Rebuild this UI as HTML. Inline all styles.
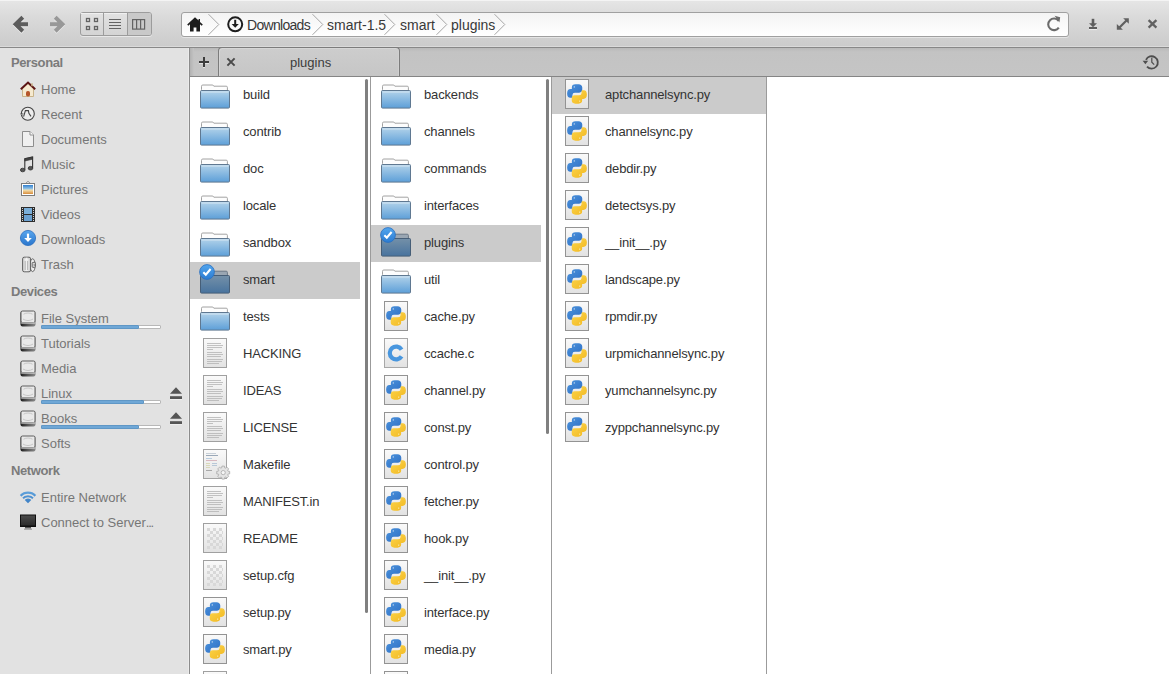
<!DOCTYPE html>
<html><head><meta charset="utf-8">
<style>
*{box-sizing:border-box}
html,body{margin:0;padding:0}
body{width:1169px;height:674px;overflow:hidden;position:relative;background:#fff;font-family:"Liberation Sans",sans-serif;}
.abs{position:absolute}
#hdr{box-sizing:border-box;left:0;top:0;width:1169px;height:48px;background:linear-gradient(#e6e6e6,#d9d9d9 40%,#cbcbcb);border-bottom:1px solid #888;box-shadow:inset 0 1px 0 #f4f4f4,inset 0 -1px 0 #dadada}
#side{left:0;top:48px;width:190px;height:626px;background:#e2e2e2;border-right:1px solid #8c8c8c;box-shadow:inset -1px 0 0 #ebebeb}
#tabs{left:190px;top:48px;width:979px;height:29px;background:linear-gradient(#b9b9b9,#c3c3c3 4px,#c5c5c5);border-bottom:1px solid #858585}
.txt{white-space:nowrap;line-height:1}
.sh{font-weight:bold;font-size:13px;color:#7b7b7b;letter-spacing:-0.4px}
.si{font-size:13px;color:#767676}
.row{position:absolute;height:37px}
.sel{background:#cbcbcb}
.fn{position:absolute;font-size:13px;color:#333;white-space:nowrap;line-height:1;letter-spacing:-0.15px}
.col{position:absolute;top:77px;height:597px;overflow:hidden;background:#fff}
.bord{position:absolute;top:77px;width:1px;height:597px;background:#9b9b9b}
svg{position:absolute;overflow:visible}
</style></head><body>
<svg width="0" height="0" style="position:absolute">
<defs>
<linearGradient id="gfold" x1="0" y1="0" x2="0" y2="1"><stop offset="0" stop-color="#b3d3ea"/><stop offset="1" stop-color="#5d9fd8"/></linearGradient>
<linearGradient id="gfolds" x1="0" y1="0" x2="0" y2="1"><stop offset="0" stop-color="#7490a8"/><stop offset="1" stop-color="#48739e"/></linearGradient>
<linearGradient id="gdoc" x1="0" y1="0" x2="0" y2="1"><stop offset="0" stop-color="#fafafa"/><stop offset="1" stop-color="#e2e2e2"/></linearGradient>
<symbol id="folder" viewBox="0 0 32 26">
<path d="M2.5 5.5V2.3Q2.5 1 3.8 1H13.8L14.8 2.2H27.2Q28.4 2.2 28.4 3.4V7.5H2.5Z" fill="#fdfdfd" stroke="#a2a2a2" stroke-width="1"/>
<rect x="1.5" y="6.5" width="29" height="17.6" rx="1" fill="url(#gfold)" stroke="#5f7891" stroke-width="1"/>
<rect x="2.5" y="7.5" width="27" height="1" fill="#d8e8f4" opacity=".9"/>
</symbol>
<symbol id="folders" viewBox="0 0 32 26">
<path d="M2.5 5.5V2.3Q2.5 1 3.8 1H13.8L14.8 2.2H27.2Q28.4 2.2 28.4 3.4V7.5H2.5Z" fill="#9aa6b2" stroke="#6b7886" stroke-width="1"/>
<rect x="1.5" y="6.5" width="29" height="17.6" rx="1" fill="url(#gfolds)" stroke="#465e77" stroke-width="1"/>
</symbol>
<symbol id="check" viewBox="0 0 16 16">
<defs><linearGradient id="gchk" x1="0" y1="0" x2="0" y2="1"><stop offset="0" stop-color="#52a6ee"/><stop offset="1" stop-color="#2c7cd2"/></linearGradient></defs>
<circle cx="8" cy="8" r="7.4" fill="url(#gchk)" stroke="#2a6fbf" stroke-width=".8"/>
<path d="M4.3 8.2l2.5 2.4 4.8-5.6" fill="none" stroke="#fff" stroke-width="2.1"/>
</symbol>
<symbol id="py" viewBox="0 0 24 30">
<defs><linearGradient id="gpyb" x1="0" y1="0" x2="1" y2="1"><stop offset="0" stop-color="#4a92dc"/><stop offset="1" stop-color="#2f6fc4"/></linearGradient>
<linearGradient id="gpyy" x1="0" y1="0" x2="1" y2="1"><stop offset="0" stop-color="#fbd44a"/><stop offset="1" stop-color="#f2b821"/></linearGradient></defs>
<rect x="0.5" y="0.5" width="23" height="29" fill="url(#gdoc)" stroke="#939393"/>
<path d="M10.5 6c-3 0-3 1.3-3 2.4V10h4.8v.7H5.6C3.7 10.7 2.8 12 2.8 14.4s.9 3.7 2.6 3.7h1.4v-2.1c0-1.6 1.4-3 3-3h4.4c1.4 0 2.4-1.1 2.4-2.4V8.4c0-1.3-1.1-2.4-3-2.4z" fill="url(#gpyb)" stroke="url(#gpyb)" stroke-width="1.3" stroke-linejoin="round"/>
<circle cx="9.3" cy="7.9" r=".7" fill="#cfe0f5"/>
<path d="M13.5 24c3 0 3-1.3 3-2.4V20h-4.8v-.7h6.7c1.9 0 2.8-1.3 2.8-3.7s-.9-3.7-2.6-3.7h-1.4v2.1c0 1.6-1.4 3-3 3H9.8c-1.4 0-2.4 1.1-2.4 2.4v2.2c0 1.3 1.1 2.4 3 2.4z" fill="url(#gpyy)" stroke="url(#gpyy)" stroke-width="1.3" stroke-linejoin="round"/>
<circle cx="14.7" cy="22.1" r=".7" fill="#fdf0c0"/>
</symbol>
<symbol id="txt" viewBox="0 0 24 30">
<rect x="0.5" y="0.5" width="23" height="29" fill="url(#gdoc)" stroke="#a0a0a0"/>
<g stroke="#b4b4b4" stroke-width=".8">
<path d="M4 5.5h14M4 7.5h16M4 9.5h15M4 11.5h6M4 14.5h15M4 16.5h16M4 18.5h14M4 21.5h16M4 23.5h15M4 25.5h12"/>
</g>
</symbol>
<symbol id="chk" viewBox="0 0 24 30">
<rect x="0.5" y="0.5" width="23" height="29" fill="url(#gdoc)" stroke="#a0a0a0"/>
<pattern id="pchk" width="6" height="6" patternUnits="userSpaceOnUse" x="4" y="5"><rect width="3" height="3" fill="#d8d8d8"/><rect x="3" y="3" width="3" height="3" fill="#d8d8d8"/></pattern>
<rect x="4" y="5" width="16" height="21" fill="url(#pchk)"/>
</symbol>
<symbol id="cfile" viewBox="0 0 24 30">
<rect x="0.5" y="0.5" width="23" height="29" fill="url(#gdoc)" stroke="#a8a8a8"/>
<path d="M17.6 11.6A6.4 6.4 0 1 0 17.6 18.4" fill="none" stroke="#4896de" stroke-width="4.2"/>
</symbol>
<symbol id="make" viewBox="0 0 24 30" style="overflow:visible">
<rect x="0.5" y="0.5" width="23" height="29" fill="url(#gdoc)" stroke="#a4a4a4"/>
<g stroke-width="1"><path d="M3 4.5h10" stroke="#c8d0d8"/><path d="M3 6.5h12" stroke="#9aa8b8"/><path d="M3 9.5h6" stroke="#b8cce0"/><path d="M3 11.5h11" stroke="#d8b8c0"/><path d="M3 14.5h4M3 16.5h4M3 18.5h4" stroke="#d8d8b8"/><path d="M9 14.5h5M9 16.5h5" stroke="#b8c8d8"/><path d="M3 21.5h6" stroke="#a8a8a8"/></g>
<path d="M24.97 22.10 L26.68 22.34 L26.68 24.86 L24.97 25.10 L24.64 25.91 L25.67 27.29 L23.89 29.07 L22.51 28.04 L21.70 28.37 L21.46 30.08 L18.94 30.08 L18.70 28.37 L17.89 28.04 L16.51 29.07 L14.73 27.29 L15.76 25.91 L15.43 25.10 L13.72 24.86 L13.72 22.34 L15.43 22.10 L15.76 21.29 L14.73 19.91 L16.51 18.13 L17.89 19.16 L18.70 18.83 L18.94 17.12 L21.46 17.12 L21.70 18.83 L22.51 19.16 L23.89 18.13 L25.67 19.91 L24.64 21.29Z" fill="#e4e4e4" stroke="#a8a8a8" stroke-width=".8" stroke-linejoin="round"/>
<circle cx="20.2" cy="23.6" r="2.1" fill="#f6f6f6" stroke="#a8a8a8" stroke-width=".8"/>
</symbol>
</defs>
</svg>

<div id="hdr" class="abs"></div>
<svg style="left:12px;top:15px" width="18" height="19" viewBox="0 0 18 19"><g fill="none" stroke="#fff" stroke-opacity=".6" stroke-width="4" transform="translate(0,1)"><path d="M10.8 2.2L3.6 9.2 10.8 16.2M5 9.2H16"/></g><g fill="none" stroke="#5c5c5c" stroke-width="4"><path d="M10.8 2.2L3.6 9.2 10.8 16.2M5 9.2H16"/></g></svg>
<svg style="left:48px;top:15px" width="18" height="19" viewBox="0 0 18 19"><g fill="none" stroke="#fff" stroke-opacity=".5" stroke-width="4" transform="translate(0,1)"><path d="M7.2 2.2L14.4 9.2 7.2 16.2M13 9.2H2"/></g><g fill="none" stroke="#989898" stroke-width="4"><path d="M7.2 2.2L14.4 9.2 7.2 16.2M13 9.2H2"/></g></svg>
<div class="abs" style="left:80px;top:12px;width:72px;height:24px;border:1px solid #9c9c9c;border-radius:3px;background:linear-gradient(#e2e2e2,#d4d4d4);box-shadow:0 1px 0 rgba(255,255,255,.5)"></div>
<div class="abs" style="left:81px;top:13px;width:22px;height:22px;box-shadow:inset 0 1px 0 #f0f0f0"></div>
<div class="abs" style="left:104px;top:13px;width:23px;height:22px;box-shadow:inset 0 1px 0 #f0f0f0"></div>
<div class="abs" style="left:103px;top:13px;width:1px;height:22px;background:#9c9c9c"></div>
<div class="abs" style="left:127px;top:13px;width:1px;height:22px;background:#9c9c9c"></div>
<div class="abs" style="left:128px;top:13px;width:23px;height:22px;background:#c9c9c9;border-radius:0 2px 2px 0"></div>
<svg style="left:80px;top:12px" width="72" height="24" viewBox="0 0 72 24"><g fill="none" stroke="#636363" stroke-width="1.3"><rect x="6.5" y="6.5" width="3" height="3"/><rect x="14.5" y="6.5" width="3" height="3"/><rect x="6.5" y="14.5" width="3" height="3"/><rect x="14.5" y="14.5" width="3" height="3"/></g><g stroke="#636363" stroke-width="1"><path d="M29 7.5h12M29 10.5h12M29 13.5h12M29 16.5h12"/></g><g fill="none" stroke="#636363" stroke-width="1.2"><rect x="52.6" y="7.6" width="12" height="9.5"/><path d="M56.6 7.6v9.5M60.6 7.6v9.5"/></g></svg>
<div class="abs" style="left:181px;top:12px;width:888px;height:25px;border:1px solid #a0a0a0;border-radius:3px;background:linear-gradient(#f4f4f4,#fff);box-shadow:0 1px 0 rgba(255,255,255,.45)"></div>
<svg style="left:186px;top:16px" width="18" height="17" viewBox="0 0 18 17"><path d="M9 1.2L1.2 8.6 2.3 9.8 4 8.3V15.6H7.6V11.6H10.4V15.6H14V8.3L15.7 9.8 16.8 8.6 14 6V3H12.6V4.6Z" fill="#1c1c1c"/></svg>
<svg style="left:208px;top:13px" width="12" height="23" viewBox="0 0 12 23"><path d="M0.5 1.2L10.8 11.5 0.5 21.8" fill="none" stroke="#a6a6a6" stroke-width="1"/></svg>
<svg style="left:312px;top:13px" width="12" height="23" viewBox="0 0 12 23"><path d="M0.5 1.2L10.8 11.5 0.5 21.8" fill="none" stroke="#a6a6a6" stroke-width="1"/></svg>
<svg style="left:384px;top:13px" width="12" height="23" viewBox="0 0 12 23"><path d="M0.5 1.2L10.8 11.5 0.5 21.8" fill="none" stroke="#a6a6a6" stroke-width="1"/></svg>
<svg style="left:436px;top:13px" width="12" height="23" viewBox="0 0 12 23"><path d="M0.5 1.2L10.8 11.5 0.5 21.8" fill="none" stroke="#a6a6a6" stroke-width="1"/></svg>
<svg style="left:494px;top:13px" width="12" height="23" viewBox="0 0 12 23"><path d="M0.5 1.2L10.8 11.5 0.5 21.8" fill="none" stroke="#a6a6a6" stroke-width="1"/></svg>
<svg style="left:226px;top:15px" width="18" height="18" viewBox="0 0 18 18"><circle cx="9.2" cy="9.3" r="7" fill="none" stroke="#1e1e1e" stroke-width="2"/><path d="M9.2 4.8v5" stroke="#1e1e1e" stroke-width="2"/><path d="M5.6 9H12.8L9.2 12.8Z" fill="#1e1e1e"/></svg>
<div class="abs txt" style="left:247px;top:18px;font-size:14px;color:#383838;letter-spacing:-0.7px">Downloads</div>
<div class="abs txt" style="left:327px;top:18px;font-size:14px;color:#383838;letter-spacing:0px">smart-1.5</div>
<div class="abs txt" style="left:400px;top:18px;font-size:14px;color:#383838;letter-spacing:0px">smart</div>
<div class="abs txt" style="left:451px;top:18px;font-size:14px;color:#383838;letter-spacing:0px">plugins</div>
<svg style="left:1046px;top:15px" width="16" height="17" viewBox="0 0 16 17"><path d="M12.6 5.8A5.8 5.8 0 1 0 12.8 12.6" fill="none" stroke="#6b6b6b" stroke-width="2.1"/><path d="M8.6 0.8L14.2 2.2 13.4 7.6Z" fill="#6b6b6b"/></svg>
<svg style="left:1087px;top:17px" width="12" height="14" viewBox="0 0 12 14"><path d="M6 1.8v6" stroke="#5e5e5e" stroke-width="2.6"/><path d="M2 6.2H10L6 10.2Z" fill="#5e5e5e"/><rect x="2" y="10" width="8" height="2" fill="#5e5e5e"/><path d="M2 12.6h8" stroke="#fff" stroke-opacity=".7" stroke-width=".9"/></svg>
<svg style="left:1116px;top:17px" width="14" height="14" viewBox="0 0 14 14"><path d="M3 11L11.2 2.8" stroke="#616161" stroke-width="2.2"/><path d="M7.2 1.2H12.8V6.8Z" fill="#616161"/><path d="M0.8 6.9V12.8H6.9Z" fill="#616161"/></svg>
<svg style="left:1147px;top:19px" width="11" height="10" viewBox="0 0 11 10"><path d="M1.6 1.2L9.4 8.6M9.4 1.2L1.6 8.6" stroke="#616161" stroke-width="2.3"/></svg>
<div id="side" class="abs"></div>
<div class="abs txt sh" style="left:11px;top:56px">Personal</div>
<svg style="left:20px;top:81px" width="16" height="16" viewBox="0 0 16 16"><path d="M2.5 7.5V15.5H13.5V7.5L8 2.5Z" fill="#f6ead0" stroke="#c9b48a" stroke-width="1"/><rect x="6" y="10" width="4" height="5.5" rx="1.8" fill="#b5552a"/><path d="M0.8 8.2L8 1.6 15.2 8.2" fill="none" stroke="#5c1414" stroke-width="2"/><path d="M12 2.2v3" stroke="#c9b48a" stroke-width="1.5"/></svg>
<div class="abs txt si" style="left:41px;top:83px">Home</div>
<svg style="left:20px;top:106px" width="16" height="16" viewBox="0 0 16 16"><circle cx="7.8" cy="7.8" r="6.5" fill="#ececec" stroke="#454545" stroke-width="1.1"/><path d="M3.6 10.6L5.4 4.6H8.4L8.9 7.4 11 10.4" fill="none" stroke="#454545" stroke-width="1.1"/><path d="M0.4 7.4H3.6L1.8 10.6Z" fill="#454545"/><path d="M1.4 7.9H2.8L2 9.2Z" fill="#f4f4f4"/></svg>
<div class="abs txt si" style="left:41px;top:108px">Recent</div>
<svg style="left:21px;top:131px" width="14" height="17" viewBox="0 0 14 17"><path d="M1.5 0.5H9L12.5 4V15.5H1.5Z" fill="#f0f0f0" stroke="#8e8e8e" stroke-width="1"/><path d="M9 0.5V4H12.5" fill="#fff" stroke="#8e8e8e" stroke-width="1"/></svg>
<div class="abs txt si" style="left:41px;top:133px">Documents</div>
<svg style="left:19px;top:156px" width="16" height="17" viewBox="0 0 16 17"><path d="M5.8 13.8V2.8L13.6 1V12" fill="none" stroke="#333" stroke-width="1.1"/><path d="M5.8 2.8L13.6 1V3.2L5.8 5Z" fill="#444" stroke="#333" stroke-width=".6"/><ellipse cx="3.7" cy="14" rx="2.3" ry="1.8" fill="#555" stroke="#2e2e2e" stroke-width=".8"/><ellipse cx="11.5" cy="12.2" rx="2.3" ry="1.8" fill="#555" stroke="#2e2e2e" stroke-width=".8"/></svg>
<div class="abs txt si" style="left:41px;top:158px">Music</div>
<svg style="left:20px;top:180px" width="16" height="17" viewBox="0 0 16 17"><path d="M5.5 3.5L8 1.2 10.5 3.5" fill="none" stroke="#9a9a9a" stroke-width="1"/><rect x="1.5" y="3.5" width="13" height="12" fill="#fff" stroke="#7c7c7c"/><defs><linearGradient id="gpic" x1="0" y1="0" x2="0" y2="1"><stop offset="0" stop-color="#2f7fd0"/><stop offset=".45" stop-color="#9cc8e6"/><stop offset=".55" stop-color="#f3e1b0"/><stop offset="1" stop-color="#d98c3a"/></linearGradient></defs><rect x="3" y="5" width="10" height="9" fill="url(#gpic)"/></svg>
<div class="abs txt si" style="left:41px;top:183px">Pictures</div>
<svg style="left:21px;top:207px" width="14" height="15" viewBox="0 0 14 15"><rect x="0" y="0" width="14" height="15" fill="#2c2c2c"/><rect x="3" y="1" width="8" height="6" fill="#7aaed8"/><rect x="3" y="8" width="8" height="6" fill="#6aa0d0"/><g fill="#d0d0d0"><rect x="1" y="1" width="1" height="1"/><rect x="1" y="3" width="1" height="1"/><rect x="1" y="5" width="1" height="1"/><rect x="1" y="7" width="1" height="1"/><rect x="1" y="9" width="1" height="1"/><rect x="1" y="11" width="1" height="1"/><rect x="1" y="13" width="1" height="1"/><rect x="12" y="1" width="1" height="1"/><rect x="12" y="3" width="1" height="1"/><rect x="12" y="5" width="1" height="1"/><rect x="12" y="7" width="1" height="1"/><rect x="12" y="9" width="1" height="1"/><rect x="12" y="11" width="1" height="1"/><rect x="12" y="13" width="1" height="1"/></g></svg>
<div class="abs txt si" style="left:41px;top:208px">Videos</div>
<svg style="left:20px;top:230px" width="16" height="16" viewBox="0 0 16 16"><defs><linearGradient id="gdl" x1="0" y1="0" x2="0" y2="1"><stop offset="0" stop-color="#58a6ee"/><stop offset="1" stop-color="#2a76cc"/></linearGradient></defs><circle cx="8" cy="8" r="7.6" fill="url(#gdl)" stroke="#2b6fbf" stroke-width=".8"/><path d="M8 3.6V8.5" stroke="#fff" stroke-width="2.2"/><path d="M4.2 8H11.8L8 12Z" fill="#fff"/></svg>
<div class="abs txt si" style="left:41px;top:233px">Downloads</div>
<svg style="left:22px;top:256px" width="15" height="17" viewBox="0 0 15 17"><defs><linearGradient id="gtr" x1="0" y1="0" x2="1" y2="0"><stop offset="0" stop-color="#cfcfcf"/><stop offset=".5" stop-color="#f2f2f2"/><stop offset="1" stop-color="#c8c8c8"/></linearGradient></defs><ellipse cx="10.6" cy="9.2" rx="2.6" ry="6.4" fill="#ededed" stroke="#5a5a5a" stroke-width=".9"/><rect x="10.2" y="6.4" width="3.2" height="5" rx=".8" fill="#e0e0e0" stroke="#5a5a5a" stroke-width=".9"/><path d="M11.3 8.3h1.2v1.6h-1.2" fill="none" stroke="#777" stroke-width=".6"/><rect x="0.6" y="1.2" width="8" height="14.6" rx="1.6" fill="url(#gtr)" stroke="#555" stroke-width=".9"/><path d="M1.5 3.2Q4.6 0.4 7.7 3.2" fill="#fff" stroke="#bbb" stroke-width=".6"/><path d="M3.2 5v9M5.6 5v9" stroke="#a8a8a8" stroke-width=".8"/></svg>
<div class="abs txt si" style="left:41px;top:258px">Trash</div>
<div class="abs txt sh" style="left:11px;top:285px">Devices</div>
<svg style="left:20px;top:310px" width="16" height="17" viewBox="0 0 16 17"><defs><linearGradient id="gdrv" x1="0" y1="0" x2="1" y2="0"><stop offset="0" stop-color="#1e1e1e"/><stop offset=".5" stop-color="#5a5a5a"/><stop offset="1" stop-color="#8a8a8a"/></linearGradient></defs><rect x="0.5" y="1" width="15" height="15.4" rx="2" fill="url(#gdrv)"/><rect x="1" y="1" width="14" height="11.6" rx="1.5" fill="#e9e9e9" stroke="#5e5e5e" stroke-width="1"/><path d="M3.5 4.2C6 2.6 10 2.6 12.5 4.2M3 9C6 11 10 11 13 9" fill="none" stroke="#bdbdbd" stroke-width=".8"/><rect x="1.2" y="12.6" width="13.6" height=".9" fill="#f4f4f4"/></svg>
<div class="abs txt si" style="left:41px;top:312px">File System</div>
<svg style="left:20px;top:335px" width="16" height="17" viewBox="0 0 16 17"><defs><linearGradient id="gdrv" x1="0" y1="0" x2="1" y2="0"><stop offset="0" stop-color="#1e1e1e"/><stop offset=".5" stop-color="#5a5a5a"/><stop offset="1" stop-color="#8a8a8a"/></linearGradient></defs><rect x="0.5" y="1" width="15" height="15.4" rx="2" fill="url(#gdrv)"/><rect x="1" y="1" width="14" height="11.6" rx="1.5" fill="#e9e9e9" stroke="#5e5e5e" stroke-width="1"/><path d="M3.5 4.2C6 2.6 10 2.6 12.5 4.2M3 9C6 11 10 11 13 9" fill="none" stroke="#bdbdbd" stroke-width=".8"/><rect x="1.2" y="12.6" width="13.6" height=".9" fill="#f4f4f4"/></svg>
<div class="abs txt si" style="left:41px;top:337px">Tutorials</div>
<svg style="left:20px;top:360px" width="16" height="17" viewBox="0 0 16 17"><defs><linearGradient id="gdrv" x1="0" y1="0" x2="1" y2="0"><stop offset="0" stop-color="#1e1e1e"/><stop offset=".5" stop-color="#5a5a5a"/><stop offset="1" stop-color="#8a8a8a"/></linearGradient></defs><rect x="0.5" y="1" width="15" height="15.4" rx="2" fill="url(#gdrv)"/><rect x="1" y="1" width="14" height="11.6" rx="1.5" fill="#e9e9e9" stroke="#5e5e5e" stroke-width="1"/><path d="M3.5 4.2C6 2.6 10 2.6 12.5 4.2M3 9C6 11 10 11 13 9" fill="none" stroke="#bdbdbd" stroke-width=".8"/><rect x="1.2" y="12.6" width="13.6" height=".9" fill="#f4f4f4"/></svg>
<div class="abs txt si" style="left:41px;top:362px">Media</div>
<svg style="left:20px;top:385px" width="16" height="17" viewBox="0 0 16 17"><defs><linearGradient id="gdrv" x1="0" y1="0" x2="1" y2="0"><stop offset="0" stop-color="#1e1e1e"/><stop offset=".5" stop-color="#5a5a5a"/><stop offset="1" stop-color="#8a8a8a"/></linearGradient></defs><rect x="0.5" y="1" width="15" height="15.4" rx="2" fill="url(#gdrv)"/><rect x="1" y="1" width="14" height="11.6" rx="1.5" fill="#e9e9e9" stroke="#5e5e5e" stroke-width="1"/><path d="M3.5 4.2C6 2.6 10 2.6 12.5 4.2M3 9C6 11 10 11 13 9" fill="none" stroke="#bdbdbd" stroke-width=".8"/><rect x="1.2" y="12.6" width="13.6" height=".9" fill="#f4f4f4"/></svg>
<div class="abs txt si" style="left:41px;top:387px">Linux</div>
<svg style="left:20px;top:410px" width="16" height="17" viewBox="0 0 16 17"><defs><linearGradient id="gdrv" x1="0" y1="0" x2="1" y2="0"><stop offset="0" stop-color="#1e1e1e"/><stop offset=".5" stop-color="#5a5a5a"/><stop offset="1" stop-color="#8a8a8a"/></linearGradient></defs><rect x="0.5" y="1" width="15" height="15.4" rx="2" fill="url(#gdrv)"/><rect x="1" y="1" width="14" height="11.6" rx="1.5" fill="#e9e9e9" stroke="#5e5e5e" stroke-width="1"/><path d="M3.5 4.2C6 2.6 10 2.6 12.5 4.2M3 9C6 11 10 11 13 9" fill="none" stroke="#bdbdbd" stroke-width=".8"/><rect x="1.2" y="12.6" width="13.6" height=".9" fill="#f4f4f4"/></svg>
<div class="abs txt si" style="left:41px;top:412px">Books</div>
<svg style="left:20px;top:435px" width="16" height="17" viewBox="0 0 16 17"><defs><linearGradient id="gdrv" x1="0" y1="0" x2="1" y2="0"><stop offset="0" stop-color="#1e1e1e"/><stop offset=".5" stop-color="#5a5a5a"/><stop offset="1" stop-color="#8a8a8a"/></linearGradient></defs><rect x="0.5" y="1" width="15" height="15.4" rx="2" fill="url(#gdrv)"/><rect x="1" y="1" width="14" height="11.6" rx="1.5" fill="#e9e9e9" stroke="#5e5e5e" stroke-width="1"/><path d="M3.5 4.2C6 2.6 10 2.6 12.5 4.2M3 9C6 11 10 11 13 9" fill="none" stroke="#bdbdbd" stroke-width=".8"/><rect x="1.2" y="12.6" width="13.6" height=".9" fill="#f4f4f4"/></svg>
<div class="abs txt si" style="left:41px;top:437px">Softs</div>
<div class="abs txt sh" style="left:11px;top:464px">Network</div>
<svg style="left:19px;top:490px" width="18" height="14" viewBox="0 0 18 14"><defs><linearGradient id="gwifi" x1="0" y1="0" x2="0" y2="1"><stop offset="0" stop-color="#5fa2dc"/><stop offset="1" stop-color="#3a7ec4"/></linearGradient></defs><path d="M9 13.2L0.80 5.00A11.6 11.6 0 0 1 17.20 5.00Z" fill="url(#gwifi)"/><path d="M2.34 7.61A8.7 8.7 0 0 1 15.66 7.61 M4.86 9.73A5.4 5.4 0 0 1 13.14 9.73" fill="none" stroke="#e2e2e2" stroke-width="1.3"/></svg>
<div class="abs txt si" style="left:41px;top:491px">Entire Network</div>
<svg style="left:19px;top:514px" width="18" height="17" viewBox="0 0 18 17"><rect x="1" y="0.5" width="16" height="12.5" fill="#0e0e0e"/><defs><linearGradient id="gmon" x1="0" y1="0" x2="0" y2="1"><stop offset="0" stop-color="#4a4a4a"/><stop offset="1" stop-color="#2a2a2a"/></linearGradient></defs><rect x="2" y="1.5" width="14" height="10" fill="url(#gmon)"/><path d="M6 13V14.5H12V13" fill="#555"/><rect x="5" y="14.5" width="8" height="1.3" rx=".6" fill="#9a9a9a"/></svg>
<div class="abs txt si" style="left:41px;top:516px">Connect to Server<span style="letter-spacing:-1.2px">...</span></div>
<div class="abs" style="left:41px;top:325px;width:120px;height:4px;background:#fff;border:1px solid #b8b8b8;border-radius:1px"></div>
<div class="abs" style="left:41px;top:325px;width:98px;height:4px;background:#6fa7d6;border:1px solid #5f97c6;border-radius:1px"></div>
<div class="abs" style="left:41px;top:400px;width:120px;height:4px;background:#fff;border:1px solid #b8b8b8;border-radius:1px"></div>
<div class="abs" style="left:41px;top:400px;width:103px;height:4px;background:#6fa7d6;border:1px solid #5f97c6;border-radius:1px"></div>
<div class="abs" style="left:41px;top:425px;width:120px;height:4px;background:#fff;border:1px solid #b8b8b8;border-radius:1px"></div>
<div class="abs" style="left:41px;top:425px;width:98px;height:4px;background:#6fa7d6;border:1px solid #5f97c6;border-radius:1px"></div>
<svg style="left:169px;top:387px" width="14" height="13" viewBox="0 0 14 13"><path d="M7 0.2L13 6.8H1Z" fill="#555"/><rect x="1" y="9.2" width="12" height="2.8" fill="#555"/><path d="M1 12.6h12" stroke="#fff" stroke-opacity=".6" stroke-width=".8"/></svg>
<svg style="left:169px;top:412px" width="14" height="13" viewBox="0 0 14 13"><path d="M7 0.2L13 6.8H1Z" fill="#555"/><rect x="1" y="9.2" width="12" height="2.8" fill="#555"/><path d="M1 12.6h12" stroke="#fff" stroke-opacity=".6" stroke-width=".8"/></svg>
<div id="tabs" class="abs"></div>
<div class="abs" style="left:190px;top:48px;width:4px;height:28px;background:linear-gradient(90deg,#b2b2b2,#c4c4c4)"></div>
<svg style="left:198px;top:56px" width="12" height="12" viewBox="0 0 12 12"><path d="M6 1v10M1 6h10" stroke="#fff" stroke-opacity=".5" stroke-width="2" transform="translate(0,1)"/><path d="M6 1v10M1 6h10" stroke="#3c3c3c" stroke-width="2"/></svg>
<div class="abs" style="left:218px;top:47px;width:182px;height:29px;border:1px solid #7c7c7c;border-bottom:none;border-radius:4px 4px 0 0;background:linear-gradient(#cdcdcd,#c6c6c6);box-shadow:inset 1px 1px 0 #d6d6d6,inset -1px 0 0 #d0d0d0"></div>
<svg style="left:226px;top:57px" width="10" height="10" viewBox="0 0 10 10"><path d="M1.4 1.4L8.6 8.6M8.6 1.4L1.4 8.6" stroke="#4a4a4a" stroke-width="2"/></svg>
<div class="abs txt" style="left:290px;top:56px;font-size:13px;color:#3c3c3c">plugins</div>
<svg style="left:1142px;top:54px" width="18" height="16" viewBox="0 0 18 16"><path d="M4 5.8A6.2 6.2 0 1 1 5 12.6" fill="none" stroke="#4e4e4e" stroke-width="1.8"/><path d="M0.6 6.8H6.2L3.4 10.2Z" fill="#4e4e4e"/><path d="M9.8 3.8V8.2L12.2 10.6" fill="none" stroke="#4e4e4e" stroke-width="1.2"/></svg>
<div class="col" style="left:190px;width:180px">
<div class="row" style="left:0;top:0px;width:170px"></div>
<svg style="left:9px;top:7px" width="32" height="26"><use href="#folder"/></svg>
<div class="fn" style="left:53px;top:11px">build</div>
<div class="row" style="left:0;top:37px;width:170px"></div>
<svg style="left:9px;top:44px" width="32" height="26"><use href="#folder"/></svg>
<div class="fn" style="left:53px;top:48px">contrib</div>
<div class="row" style="left:0;top:74px;width:170px"></div>
<svg style="left:9px;top:81px" width="32" height="26"><use href="#folder"/></svg>
<div class="fn" style="left:53px;top:85px">doc</div>
<div class="row" style="left:0;top:111px;width:170px"></div>
<svg style="left:9px;top:118px" width="32" height="26"><use href="#folder"/></svg>
<div class="fn" style="left:53px;top:122px">locale</div>
<div class="row" style="left:0;top:148px;width:170px"></div>
<svg style="left:9px;top:155px" width="32" height="26"><use href="#folder"/></svg>
<div class="fn" style="left:53px;top:159px">sandbox</div>
<div class="row sel" style="left:0;top:185px;width:170px"></div>
<svg style="left:9px;top:192px" width="32" height="26"><use href="#folders"/></svg>
<svg style="left:9px;top:187px" width="16" height="16"><use href="#check"/></svg>
<div class="fn" style="left:53px;top:196px">smart</div>
<div class="row" style="left:0;top:222px;width:170px"></div>
<svg style="left:9px;top:229px" width="32" height="26"><use href="#folder"/></svg>
<div class="fn" style="left:53px;top:233px">tests</div>
<div class="row" style="left:0;top:259px;width:170px"></div>
<svg style="left:13px;top:261px" width="24" height="30"><use href="#txt"/></svg>
<div class="fn" style="left:53px;top:270px">HACKING</div>
<div class="row" style="left:0;top:296px;width:170px"></div>
<svg style="left:13px;top:298px" width="24" height="30"><use href="#txt"/></svg>
<div class="fn" style="left:53px;top:307px">IDEAS</div>
<div class="row" style="left:0;top:333px;width:170px"></div>
<svg style="left:13px;top:335px" width="24" height="30"><use href="#txt"/></svg>
<div class="fn" style="left:53px;top:344px">LICENSE</div>
<div class="row" style="left:0;top:370px;width:170px"></div>
<svg style="left:13px;top:372px" width="24" height="30"><use href="#make"/></svg>
<div class="fn" style="left:53px;top:381px">Makefile</div>
<div class="row" style="left:0;top:407px;width:170px"></div>
<svg style="left:13px;top:409px" width="24" height="30"><use href="#txt"/></svg>
<div class="fn" style="left:53px;top:418px">MANIFEST.in</div>
<div class="row" style="left:0;top:444px;width:170px"></div>
<svg style="left:13px;top:446px" width="24" height="30"><use href="#chk"/></svg>
<div class="fn" style="left:53px;top:455px">README</div>
<div class="row" style="left:0;top:481px;width:170px"></div>
<svg style="left:13px;top:483px" width="24" height="30"><use href="#chk"/></svg>
<div class="fn" style="left:53px;top:492px">setup.cfg</div>
<div class="row" style="left:0;top:518px;width:170px"></div>
<svg style="left:13px;top:520px" width="24" height="30"><use href="#py"/></svg>
<div class="fn" style="left:53px;top:529px">setup.py</div>
<div class="row" style="left:0;top:555px;width:170px"></div>
<svg style="left:13px;top:557px" width="24" height="30"><use href="#py"/></svg>
<div class="fn" style="left:53px;top:566px">smart.py</div>
<div class="row" style="left:0;top:592px;width:170px"></div>
<svg style="left:13px;top:594px" width="24" height="30"><use href="#txt"/></svg>
</div>
<div class="bord" style="left:370px"></div>
<div class="col" style="left:371px;width:180px">
<div class="row" style="left:0;top:0px;width:170px"></div>
<svg style="left:9px;top:7px" width="32" height="26"><use href="#folder"/></svg>
<div class="fn" style="left:53px;top:11px">backends</div>
<div class="row" style="left:0;top:37px;width:170px"></div>
<svg style="left:9px;top:44px" width="32" height="26"><use href="#folder"/></svg>
<div class="fn" style="left:53px;top:48px">channels</div>
<div class="row" style="left:0;top:74px;width:170px"></div>
<svg style="left:9px;top:81px" width="32" height="26"><use href="#folder"/></svg>
<div class="fn" style="left:53px;top:85px">commands</div>
<div class="row" style="left:0;top:111px;width:170px"></div>
<svg style="left:9px;top:118px" width="32" height="26"><use href="#folder"/></svg>
<div class="fn" style="left:53px;top:122px">interfaces</div>
<div class="row sel" style="left:0;top:148px;width:170px"></div>
<svg style="left:9px;top:155px" width="32" height="26"><use href="#folders"/></svg>
<svg style="left:9px;top:150px" width="16" height="16"><use href="#check"/></svg>
<div class="fn" style="left:53px;top:159px">plugins</div>
<div class="row" style="left:0;top:185px;width:170px"></div>
<svg style="left:9px;top:192px" width="32" height="26"><use href="#folder"/></svg>
<div class="fn" style="left:53px;top:196px">util</div>
<div class="row" style="left:0;top:222px;width:170px"></div>
<svg style="left:13px;top:224px" width="24" height="30"><use href="#py"/></svg>
<div class="fn" style="left:53px;top:233px">cache.py</div>
<div class="row" style="left:0;top:259px;width:170px"></div>
<svg style="left:13px;top:261px" width="24" height="30"><use href="#cfile"/></svg>
<div class="fn" style="left:53px;top:270px">ccache.c</div>
<div class="row" style="left:0;top:296px;width:170px"></div>
<svg style="left:13px;top:298px" width="24" height="30"><use href="#py"/></svg>
<div class="fn" style="left:53px;top:307px">channel.py</div>
<div class="row" style="left:0;top:333px;width:170px"></div>
<svg style="left:13px;top:335px" width="24" height="30"><use href="#py"/></svg>
<div class="fn" style="left:53px;top:344px">const.py</div>
<div class="row" style="left:0;top:370px;width:170px"></div>
<svg style="left:13px;top:372px" width="24" height="30"><use href="#py"/></svg>
<div class="fn" style="left:53px;top:381px">control.py</div>
<div class="row" style="left:0;top:407px;width:170px"></div>
<svg style="left:13px;top:409px" width="24" height="30"><use href="#py"/></svg>
<div class="fn" style="left:53px;top:418px">fetcher.py</div>
<div class="row" style="left:0;top:444px;width:170px"></div>
<svg style="left:13px;top:446px" width="24" height="30"><use href="#py"/></svg>
<div class="fn" style="left:53px;top:455px">hook.py</div>
<div class="row" style="left:0;top:481px;width:170px"></div>
<svg style="left:13px;top:483px" width="24" height="30"><use href="#py"/></svg>
<div class="fn" style="left:53px;top:492px">__init__.py</div>
<div class="row" style="left:0;top:518px;width:170px"></div>
<svg style="left:13px;top:520px" width="24" height="30"><use href="#py"/></svg>
<div class="fn" style="left:53px;top:529px">interface.py</div>
<div class="row" style="left:0;top:555px;width:170px"></div>
<svg style="left:13px;top:557px" width="24" height="30"><use href="#py"/></svg>
<div class="fn" style="left:53px;top:566px">media.py</div>
<div class="row" style="left:0;top:592px;width:170px"></div>
<svg style="left:13px;top:594px" width="24" height="30"><use href="#py"/></svg>
</div>
<div class="bord" style="left:551px"></div>
<div class="col" style="left:552px;width:214px">
<div class="row sel" style="left:0;top:0px;width:214px"></div>
<svg style="left:13px;top:2px" width="24" height="30"><use href="#py"/></svg>
<div class="fn" style="left:53px;top:11px">aptchannelsync.py</div>
<div class="row" style="left:0;top:37px;width:214px"></div>
<svg style="left:13px;top:39px" width="24" height="30"><use href="#py"/></svg>
<div class="fn" style="left:53px;top:48px">channelsync.py</div>
<div class="row" style="left:0;top:74px;width:214px"></div>
<svg style="left:13px;top:76px" width="24" height="30"><use href="#py"/></svg>
<div class="fn" style="left:53px;top:85px">debdir.py</div>
<div class="row" style="left:0;top:111px;width:214px"></div>
<svg style="left:13px;top:113px" width="24" height="30"><use href="#py"/></svg>
<div class="fn" style="left:53px;top:122px">detectsys.py</div>
<div class="row" style="left:0;top:148px;width:214px"></div>
<svg style="left:13px;top:150px" width="24" height="30"><use href="#py"/></svg>
<div class="fn" style="left:53px;top:159px">__init__.py</div>
<div class="row" style="left:0;top:185px;width:214px"></div>
<svg style="left:13px;top:187px" width="24" height="30"><use href="#py"/></svg>
<div class="fn" style="left:53px;top:196px">landscape.py</div>
<div class="row" style="left:0;top:222px;width:214px"></div>
<svg style="left:13px;top:224px" width="24" height="30"><use href="#py"/></svg>
<div class="fn" style="left:53px;top:233px">rpmdir.py</div>
<div class="row" style="left:0;top:259px;width:214px"></div>
<svg style="left:13px;top:261px" width="24" height="30"><use href="#py"/></svg>
<div class="fn" style="left:53px;top:270px">urpmichannelsync.py</div>
<div class="row" style="left:0;top:296px;width:214px"></div>
<svg style="left:13px;top:298px" width="24" height="30"><use href="#py"/></svg>
<div class="fn" style="left:53px;top:307px">yumchannelsync.py</div>
<div class="row" style="left:0;top:333px;width:214px"></div>
<svg style="left:13px;top:335px" width="24" height="30"><use href="#py"/></svg>
<div class="fn" style="left:53px;top:344px">zyppchannelsync.py</div>
</div>
<div class="bord" style="left:766px"></div>
<div class="abs" style="left:365px;top:79px;width:3px;height:534px;background:#808080;border-radius:1.5px"></div>
<div class="abs" style="left:546px;top:79px;width:3px;height:355px;background:#808080;border-radius:1.5px"></div>
</body></html>
